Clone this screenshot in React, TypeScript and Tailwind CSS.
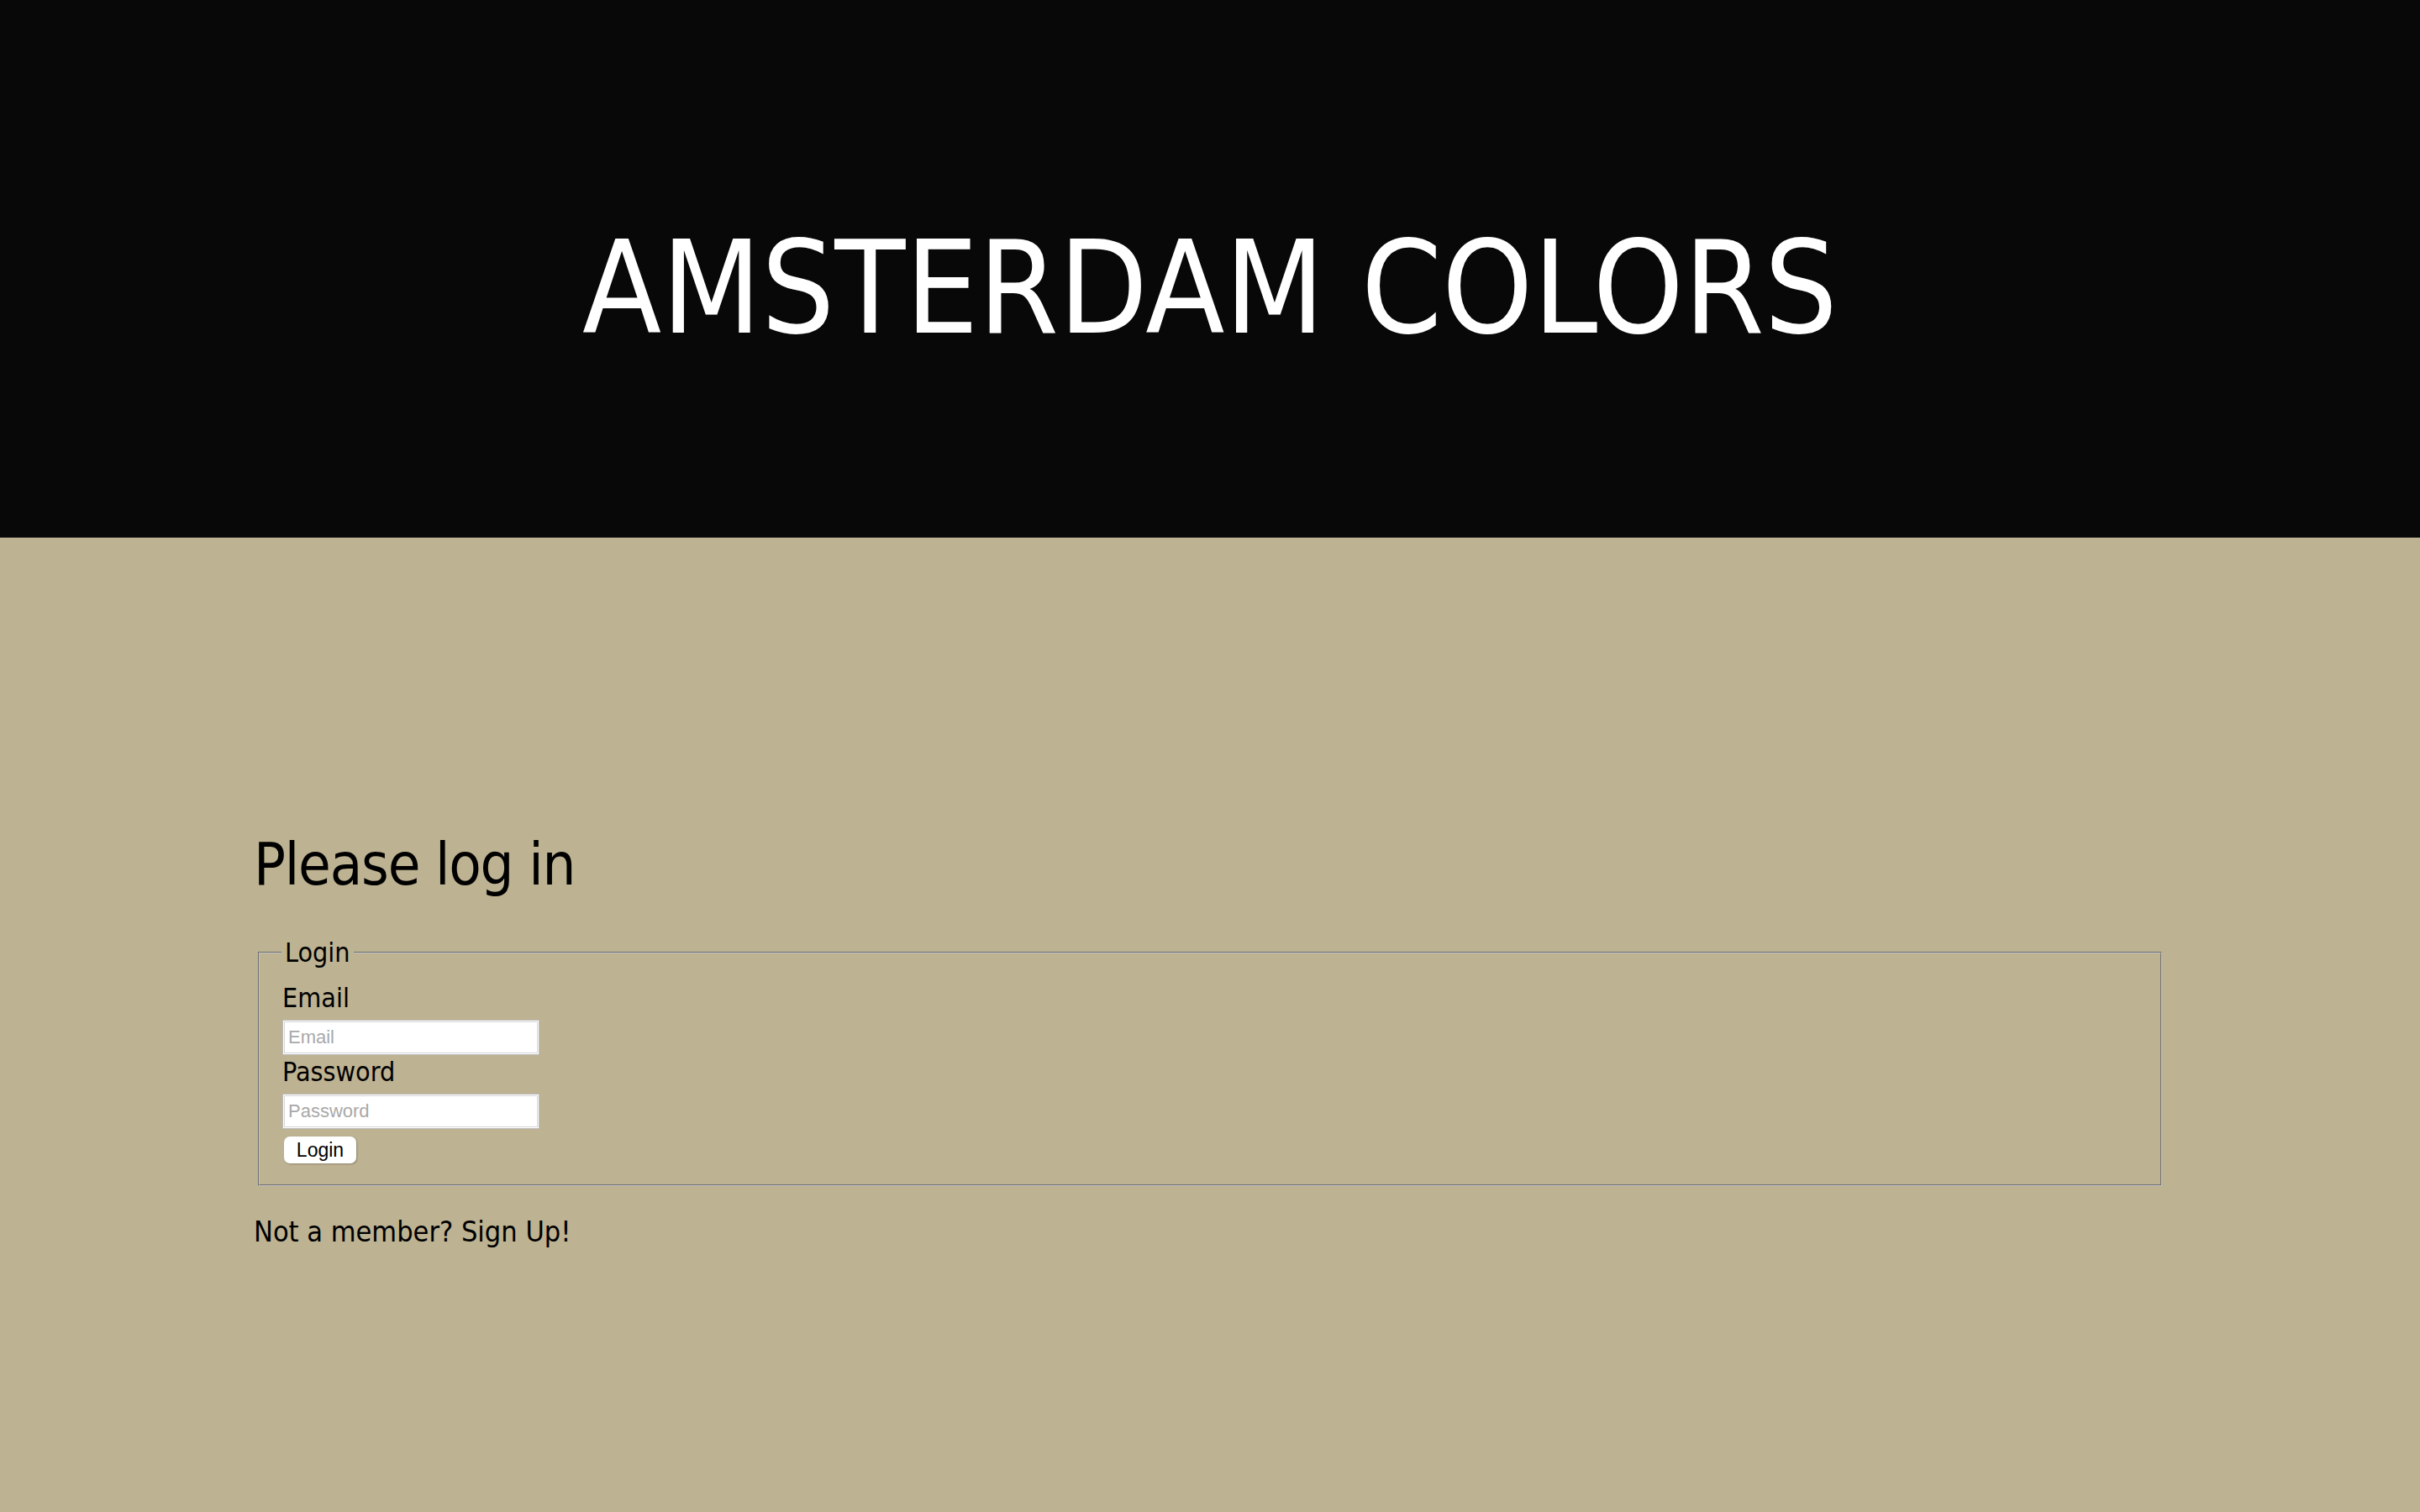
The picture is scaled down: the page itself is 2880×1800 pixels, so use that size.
export default function App() {
  return (
    <div className="min-h-[1800px] bg-[#bdb292] text-black font-['DejaVu_Sans_Condensed','DejaVu_Sans',sans-serif]">
      <header className="h-[640px] bg-[#080808] flex justify-center items-start pt-[267px]">
        <h1 className="text-[153px] leading-none font-normal text-white whitespace-nowrap">AMSTERDAM COLORS</h1>
      </header>

      <main className="w-[2276px] mx-auto pt-[354px]">
        <h2 className="text-[70px] leading-none font-normal tracking-[-1.2px]">Please log in</h2>

        <fieldset className="mt-[54px] mx-[5px] px-[26px] pb-[25px] pt-[22px] border-2 border-[#c2c2c2] [border-style:groove]">
          <legend className="px-[4px] text-[32px] leading-[32px]">Login</legend>
          <div className="flex flex-col items-start">
            <label className="pl-[1px] text-[32px] leading-[32px]">Email</label>
            <input
              type="email"
              placeholder="Email"
              className="mt-[10px] ml-[1px] w-[306px] h-[42px] bg-white border border-[#bcbcbc] shadow-[inset_0_0_0_1px_#ffffff,inset_0_0_0_2px_#d6d6d6] px-[6px] text-[22px] font-['Liberation_Sans',sans-serif] placeholder:text-[#a9a9a9] outline-none"
            />
            <label className="mt-[4px] pl-[1px] text-[32px] leading-[32px]">Password</label>
            <input
              type="password"
              placeholder="Password"
              className="mt-[10px] ml-[1px] w-[306px] h-[42px] bg-white border border-[#bcbcbc] shadow-[inset_0_0_0_1px_#ffffff,inset_0_0_0_2px_#d6d6d6] px-[6px] text-[22px] font-['Liberation_Sans',sans-serif] placeholder:text-[#a9a9a9] outline-none"
            />
            <button className="mt-[9px] ml-[3px] w-[86px] h-[32px] bg-white rounded-[7px] shadow-[1px_1px_2px_rgba(0,0,0,0.25)] text-[23px] leading-none font-['Liberation_Sans',sans-serif] text-black">
              Login
            </button>
          </div>
        </fieldset>

        <p className="mt-[37px] text-[34px] leading-[34px]">Not a member? Sign Up!</p>
      </main>
    </div>
  )
}
